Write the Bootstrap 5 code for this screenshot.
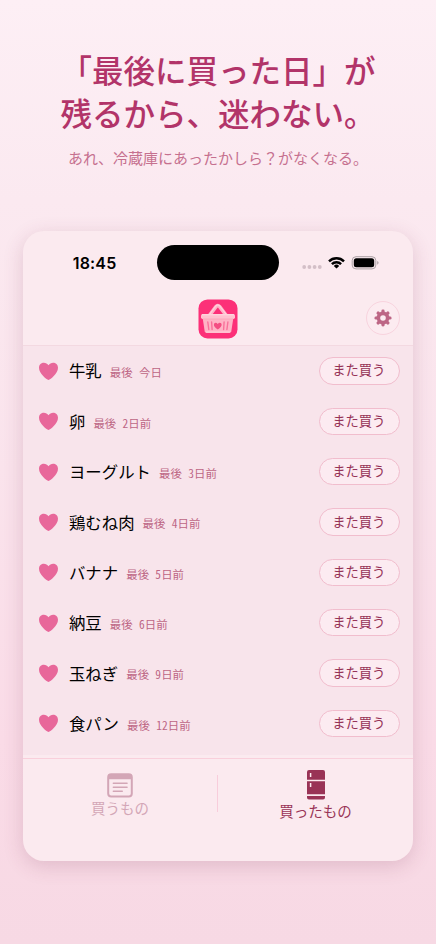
<!DOCTYPE html>
<html lang="ja">
<head>
<meta charset="utf-8">
<meta name="viewport" content="width=device-width, initial-scale=1">
<title>買ったもの</title>
<link href="https://cdn.jsdelivr.net/npm/bootstrap@5.3.0/dist/css/bootstrap.min.css" rel="stylesheet">
<style>
html,body{height:944px}
body{font-family:"Noto Sans CJK JP",sans-serif;background:linear-gradient(#fdeff5 0,#fbe9f0 200px,#fae3ec 470px,#fadbe7 740px,#f7d9e4 944px);overflow:hidden;color:#000}
svg{display:block;flex:none}
.headline{padding-top:48px;font-size:31.5px;line-height:43px;font-weight:500;color:#b23469;height:137px;white-space:nowrap}
.tagline{font-size:15px;line-height:22px;color:#c6708f;margin-top:10px;height:84px;white-space:nowrap}
.phone{width:390px;height:630px;margin-left:22.8px;border-radius:21px;background:#fbeaef;box-shadow:0 5px 20px rgba(120,50,80,.19);overflow:hidden}
.statusbar{height:63px;padding-top:13.5px}
.clock{width:134px;padding-left:50px;font:600 16px/36px Inter,sans-serif;letter-spacing:.15px}
.island{width:122px;height:35.5px;border-radius:18px;background:#000}
.signals{padding-left:23px;height:36px}
.appbar{height:51.5px;display:grid;grid-template-columns:1fr 40px 1fr;border-bottom:1px solid #f3d9e1}
.logo-tile{margin-top:4.5px}
.gear-btn{width:34px;height:34px;border:1px solid #f8d3de;background:#fcebf0;margin:7px 13px 0 0}
.history{height:409.5px;background:#f8e4eb;padding:.3px 13.3px 0 15px}
.history-row{height:50.35px}
.item-name{font-size:16.4px;line-height:24px;margin-left:10.2px;margin-top:-1px}
.item-date{font-size:11.4px;line-height:16px;color:#bd6685;margin-left:8px;font-feature-settings:"hwid";padding-top:2.5px;letter-spacing:.08px;word-spacing:.5px}
.again{width:80.5px;height:27.5px;font-size:13.3px;line-height:24px;border:1px solid #f1bdcd;background:#fcebf1;color:#963357;padding:0 1px 1px 0}
.tabs{margin-top:3px;border-top:1px solid #f9cfdb;height:103px}
.tab-item{color:#d3a6b6;font-size:14.5px;line-height:20px;padding-top:14px}
.tab-item.on{color:#993356;padding-top:11px}
.tab-split{width:1px;height:37px;background:#f8cddb;margin-top:16px}
</style>
</head>
<body>
<h1 class="headline text-center m-0">「最後に買った日」が<br>残るから、迷わない。</h1>
<p class="tagline text-center mb-0">あれ、冷蔵庫にあったかしら？がなくなる。</p>
<main class="phone">
  <div class="statusbar d-flex">
    <div class="clock">18:45</div>
    <div class="island"></div>
    <div class="signals d-flex align-items-center">
      <svg width="80" height="16" viewBox="0 0 80 16">
        <g fill="#d3bfc7"><circle cx="2.2" cy="12" r="1.9"/><circle cx="7.4" cy="12" r="1.9"/><circle cx="12.6" cy="12" r="1.9"/><circle cx="17.8" cy="12" r="1.9"/></g>
        <g transform="translate(34.5 12.6)"><g fill="none" stroke="#000" stroke-width="2.4"><path d="M-7.5-6.300A10.600 10.600 0 0 1 7.500-6.300"/><path d="M-4.600-3.400A6.500 6.500 0 0 1 4.600-3.400"/></g><path d="M0 1-2.700-1.700A3.800 3.800 0 0 1 2.700-1.700Z"/></g>
        <rect x="50.2" y="1.700" width="23.600" height="12.200" rx="3.800" fill="none" stroke="#aaa0a4"/>
        <rect x="51.800" y="3.300" width="20.400" height="9" rx="2.500"/>
        <path d="M75.200 6v3.700q1.400-.6 1.400-1.850T75.200 6Z" fill="#aaa0a4"/>
      </svg>
    </div>
  </div>
  <header class="appbar">
    <span></span>
    <svg class="logo-tile" width="40" height="40" viewBox="0 0 40 40">
      <rect x=".5" y=".4" width="39" height="39" rx="9" fill="#fc3078"/>
      <path d="M11 17 18 7.700Q19.800 5.500 21.600 7.700L28.700 17" fill="none" stroke="#ffb3c7" stroke-width="3.700" stroke-linejoin="round"/>
      <path d="m10.800 16.500 7-9.500q2-2 4 0l7.200 9.500" fill="none" stroke="#ffd5dd" stroke-width="1.100"/>
      <path d="M4.500 18h31l-2.200 14.300Q33 34 31.300 34H8.700Q7 34 6.700 32.300Z" fill="#ffb4c6"/>
      <rect x="3" y="15" width="34" height="5" rx="1.700" fill="#ffc1cf"/>
      <path d="M4 15.800h32" stroke="#ffdbe2"/>
      <path d="M5 20h30" stroke="#f9a0b6" stroke-width=".7"/>
      <path d="m9.800 23 1 7.500M13.600 23l.5 7.500M26.100 23l-.5 7.500M29.900 23l-1 7.500" stroke="#f9709a" stroke-width="1.400" stroke-linecap="round"/>
      <path d="M19.800 30.400c-7.200-4.200-2.600-9-.05-5.500 2.600-3.500 7.200 1.300.05 5.500Z" fill="#f44e83"/>
      <path d="M8 33h24" stroke="#ffcbd7" stroke-width="1.200"/>
    </svg>
    <div class="d-flex justify-content-end">
      <button class="gear-btn btn rounded-circle p-0 d-flex align-items-center justify-content-center" aria-label="設定">
        <svg width="18" height="18" viewBox="-9 -9 18 18">
          <g fill="#bd6685"><g id="teeth"><rect x="-1.600" y="-8.500" width="3.200" height="17" rx="1.400"/><rect x="-8.500" y="-1.600" width="17" height="3.200" rx="1.400"/></g><use href="#teeth" transform="rotate(45)"/><circle r="6.400"/></g>
          <circle r="2.800" fill="#fcebf0"/>
        </svg>
      </button>
    </div>
  </header>
  <section class="history" id="history"></section>
  <nav class="tabs d-flex">
    <div class="tab-item d-flex flex-column align-items-center flex-fill w-50">
      <svg width="26" height="25" viewBox="0 0 26 25"><rect x="1.200" y="1.200" width="23.600" height="22.300" rx="3" fill="none" stroke="currentColor" stroke-width="2"/><path d="M1 6.300V4Q1 1 4 1h18q3 0 3 3v2.300Z" fill="currentColor"/><path d="M6.300 10.200h13.800M6.300 14.200h13.800M6.300 18.200h9" stroke="currentColor" stroke-width="1.400" stroke-linecap="round"/></svg>
      <span>買うもの</span>
    </div>
    <div class="tab-split"></div>
    <div class="tab-item on d-flex flex-column align-items-center flex-fill w-50">
      <svg width="18" height="31" viewBox="0 0 18 31"><g fill="currentColor"><path d="M0 9.800V2Q0 0 2 0h14q2 0 2 2v7.800ZM0 11.300h18v12.900H0ZM0 25.900h18V27.500q0 2-2 2H2q-2 0-2-2Z"/></g><path d="M3.600 2.900v4M3.600 13v4" stroke="#fbeaef" stroke-width="1.500"/></svg>
      <span>買ったもの</span>
    </div>
  </nav>
</main>
<script src="https://cdn.jsdelivr.net/npm/bootstrap@5.3.0/dist/js/bootstrap.bundle.min.js"></script>
<script>
const items=[["牛乳","今日"],["卵","2日前"],["ヨーグルト","3日前"],["鶏むね肉","4日前"],["バナナ","5日前"],["納豆","6日前"],["玉ねぎ","9日前"],["食パン","12日前"]];
document.getElementById("history").innerHTML=items.map(([name,date])=>`
<div class="history-row d-flex align-items-center">
  <svg width="21" height="20" viewBox="0 0 21 20"><path d="M10.500 19C8.500 18.200 1 12.700 1 6.700 1 1 8 0 10.500 4.300 13 0 20 1 20 6.700 20 12.700 12.500 18.200 10.500 19Z" fill="#e8679a"/></svg>
  <span class="item-name">${name}</span>
  <span class="item-date">最後 ${date}</span>
  <button class="again btn rounded-pill ms-auto">また買う</button>
</div>`).join("");
</script>
</body>
</html>
